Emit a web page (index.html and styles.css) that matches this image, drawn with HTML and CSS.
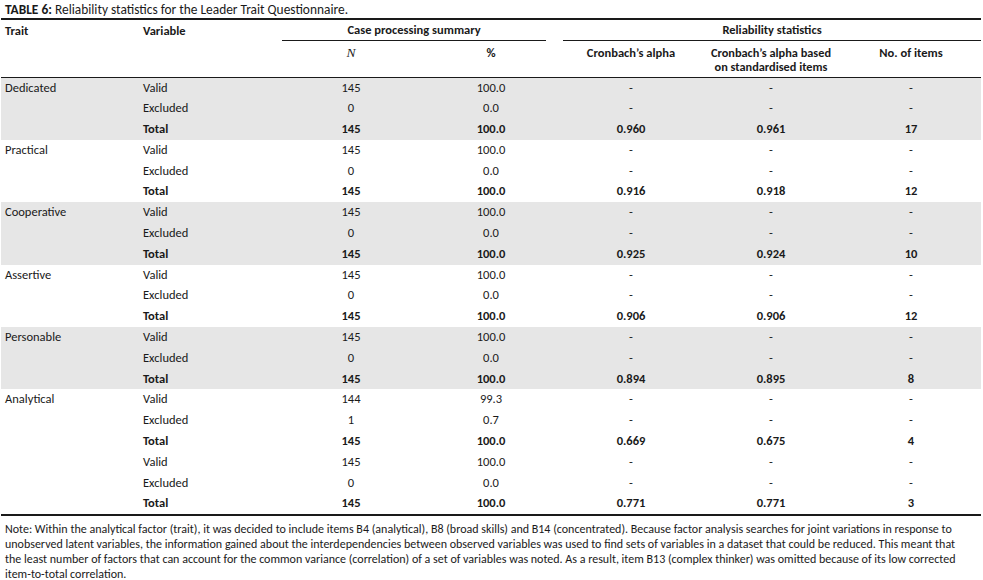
FILE: index.html
```html
<!DOCTYPE html>
<html>
<head>
<meta charset="utf-8">
<link rel="stylesheet" href="styles.css">
</head>
<body>
<div class="page">
  <div class="title"><b>TABLE 6:</b> Reliability statistics for the Leader Trait Questionnaire.</div>
  <table class="stats">
    <colgroup>
      <col class="c"><col class="c"><col class="c"><col class="c"><col class="c"><col class="c"><col class="c">
    </colgroup>
    <thead>
      <tr class="h1">
        <th class="left first">Trait</th>
        <th class="left second">Variable</th>
        <th colspan="2"><div class="span case">Case processing summary</div></th>
        <th colspan="3"><div class="span rel">Reliability statistics</div></th>
      </tr>
      <tr class="h2">
        <th></th>
        <th></th>
        <th><span class="nsym">N</span></th>
        <th>%</th>
        <th>Cronbach’s alpha</th>
        <th><div class="two">Cronbach’s alpha based</div><div class="two">on standardised items</div></th>
        <th>No. of items</th>
      </tr>
    </thead>
    <tbody class="shade">
      <tr><td class="first">Dedicated</td><td class="second">Valid</td><td>145</td><td>100.0</td><td>-</td><td>-</td><td>-</td></tr>
      <tr><td class="first"></td><td class="second">Excluded</td><td>0</td><td>0.0</td><td>-</td><td>-</td><td>-</td></tr>
      <tr class="tot"><td class="first"></td><td class="second">Total</td><td>145</td><td>100.0</td><td>0.960</td><td>0.961</td><td>17</td></tr>
    </tbody>
    <tbody>
      <tr><td class="first">Practical</td><td class="second">Valid</td><td>145</td><td>100.0</td><td>-</td><td>-</td><td>-</td></tr>
      <tr><td class="first"></td><td class="second">Excluded</td><td>0</td><td>0.0</td><td>-</td><td>-</td><td>-</td></tr>
      <tr class="tot"><td class="first"></td><td class="second">Total</td><td>145</td><td>100.0</td><td>0.916</td><td>0.918</td><td>12</td></tr>
    </tbody>
    <tbody class="shade">
      <tr><td class="first">Cooperative</td><td class="second">Valid</td><td>145</td><td>100.0</td><td>-</td><td>-</td><td>-</td></tr>
      <tr><td class="first"></td><td class="second">Excluded</td><td>0</td><td>0.0</td><td>-</td><td>-</td><td>-</td></tr>
      <tr class="tot"><td class="first"></td><td class="second">Total</td><td>145</td><td>100.0</td><td>0.925</td><td>0.924</td><td>10</td></tr>
    </tbody>
    <tbody>
      <tr><td class="first">Assertive</td><td class="second">Valid</td><td>145</td><td>100.0</td><td>-</td><td>-</td><td>-</td></tr>
      <tr><td class="first"></td><td class="second">Excluded</td><td>0</td><td>0.0</td><td>-</td><td>-</td><td>-</td></tr>
      <tr class="tot"><td class="first"></td><td class="second">Total</td><td>145</td><td>100.0</td><td>0.906</td><td>0.906</td><td>12</td></tr>
    </tbody>
    <tbody class="shade">
      <tr><td class="first">Personable</td><td class="second">Valid</td><td>145</td><td>100.0</td><td>-</td><td>-</td><td>-</td></tr>
      <tr><td class="first"></td><td class="second">Excluded</td><td>0</td><td>0.0</td><td>-</td><td>-</td><td>-</td></tr>
      <tr class="tot"><td class="first"></td><td class="second">Total</td><td>145</td><td>100.0</td><td>0.894</td><td>0.895</td><td>8</td></tr>
    </tbody>
    <tbody class="last">
      <tr><td class="first">Analytical</td><td class="second">Valid</td><td>144</td><td>99.3</td><td>-</td><td>-</td><td>-</td></tr>
      <tr><td class="first"></td><td class="second">Excluded</td><td>1</td><td>0.7</td><td>-</td><td>-</td><td>-</td></tr>
      <tr class="tot"><td class="first"></td><td class="second">Total</td><td>145</td><td>100.0</td><td>0.669</td><td>0.675</td><td>4</td></tr>
      <tr><td class="first"></td><td class="second">Valid</td><td>145</td><td>100.0</td><td>-</td><td>-</td><td>-</td></tr>
      <tr><td class="first"></td><td class="second">Excluded</td><td>0</td><td>0.0</td><td>-</td><td>-</td><td>-</td></tr>
      <tr class="tot"><td class="first"></td><td class="second">Total</td><td>145</td><td>100.0</td><td>0.771</td><td>0.771</td><td>3</td></tr>
    </tbody>
  </table>
  <p class="note">Note: Within the analytical factor (trait), it was decided to include items B4 (analytical), B8 (broad skills) and B14 (concentrated). Because factor analysis searches for joint variations in response to<br>unobserved latent variables, the information gained about the interdependencies between observed variables was used to find sets of variables in a dataset that could be reduced. This meant that<br>the least number of factors that can account for the common variance (correlation) of a set of variables was noted. As a result, item B13 (complex thinker) was omitted because of its low corrected<br>item-to-total correlation.</p>
</div>
</body>
</html>
```

FILE: styles.css
```css
html, body {
  margin: 0;
  padding: 0;
  background: #ffffff;
}

.page {
  width: 980px;
  padding: 0 2px 0 1px;
  font-family: Carlito, Lato, "Open Sans", sans-serif;
  font-size: 12.5px;
  color: #1a1a1a;
}

.title {
  height: 18px;
  line-height: 20px;
  padding-left: 4px;
  font-size: 13.4px;
  white-space: nowrap;
}

.title b {
  font-weight: 700;
}

.stats {
  width: 980px;
  border-collapse: collapse;
  table-layout: fixed;
  border-top: 2px solid #1a1a1a;
  border-bottom: 2px solid #1a1a1a;
}

.stats col.c {
  width: 140px;
}

.stats th {
  font-weight: 700;
  padding: 0;
  text-align: center;
  vertical-align: top;
}

.stats th.left {
  text-align: left;
}

.h1 th {
  height: 22px;
  line-height: 22px;
}

.span {
  height: 20px;
  line-height: 20px;
  border-bottom: 1px solid #1a1a1a;
}

.span.case {
  margin: 0 15px 0 1px;
}

.span.rel {
  margin: 0 0 0 2px;
}

.h2 {
  height: 35px;
}

.h2 th {
  height: 35px;
  line-height: 14px;
  padding-top: 4px;
  border-bottom: 1px solid #1a1a1a;
  box-sizing: border-box;
}

.two {
  height: 13.5px;
  line-height: 13.5px;
  font-size: 12.3px;
}

.nsym {
  font-family: "Liberation Serif", "DejaVu Serif", serif;
  font-style: italic;
  font-weight: 400;
  font-size: 13.5px;
}

.stats td {
  height: 20.8px;
  line-height: 20.8px;
  padding: 0;
  text-align: center;
  white-space: nowrap;
}

.stats td.first,
.stats th.first {
  text-align: left;
  padding-left: 4px;
}

.stats td.second,
.stats th.second {
  text-align: left;
  padding-left: 2px;
}

.stats tr.tot td {
  font-weight: 700;
}

.stats tbody.shade td {
  background: #e6e6e6;
}

.note {
  margin: 0;
  padding: 6px 0 0 4px;
  line-height: 15px;
  font-size: 12px;
  white-space: nowrap;
}
```
